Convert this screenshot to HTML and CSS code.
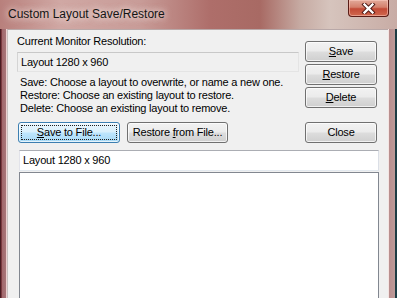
FILE: index.html
```html
<!DOCTYPE html>
<html>
<head>
<meta charset="utf-8">
<link rel="stylesheet" href="styles.css">
</head>
<body>
<div class="window">
  <div class="titlebar">
    <span class="title">Custom Layout Save/Restore</span>
    <div class="close-btn">
      <svg width="17" height="11" viewBox="0 0 17 11">
        <path d="M4.5 1.5 L12.5 9.5 M12.5 1.5 L4.5 9.5" stroke="#4a1410" stroke-width="4.2" stroke-linecap="square" fill="none"/>
        <path d="M4.5 1.5 L12.5 9.5 M12.5 1.5 L4.5 9.5" stroke="#ffffff" stroke-width="2.4" stroke-linecap="square" fill="none"/>
      </svg>
    </div>
  </div>
  <div class="frame-row">
    <div class="frame-left"></div>
    <div class="client">
      <div class="top">
        <div class="info">
          <div class="label">Current Monitor Resolution:</div>
          <div class="res">Layout 1280 x 960</div>
          <div class="help">
            <div>Save: Choose a layout to overwrite, or name a new one.</div>
            <div>Restore: Choose an existing layout to restore.</div>
            <div>Delete: Choose an existing layout to remove.</div>
          </div>
        </div>
        <div class="actions">
          <div class="btn"><span><u>S</u>ave</span></div>
          <div class="btn"><span><u>R</u>estore</span></div>
          <div class="btn"><span><u>D</u>elete</span></div>
        </div>
      </div>
      <div class="filerow">
        <div class="btn btn-wide btn-focus"><span class="focus-ring"><span><u>S</u>ave to File...</span></span></div>
        <div class="btn btn-wide2"><span>Restore <u>f</u>rom File...</span></div>
        <div class="btn btn-close"><span>Close</span></div>
      </div>
      <div class="combo">
        <div class="combo-edit">Layout 1280 x 960</div>
        <div class="combo-list"></div>
      </div>
    </div>
    <div class="frame-right"></div>
  </div>
</div>
</body>
</html>
```
FILE: styles.css
```css
html, body {
  margin: 0;
  padding: 0;
}
body {
  width: 397px;
  height: 298px;
  overflow: hidden;
  background: #1c3c44;
  font-family: "Liberation Sans", Arial, sans-serif;
}
.window {
  width: 397px;
  height: 298px;
  display: flex;
  flex-direction: column;
}
.titlebar {
  height: 29px;
  flex: none;
  display: flex;
  align-items: flex-start;
  background: linear-gradient(to right, #b8807c 0px, #d0a8a4 60px, #c89c98 140px, #ae6e6a 210px, #a86a64 260px, #c6aaa2 300px, #d6c4bd 330px, #c8aca5 397px);
}
.title {
  margin: 7px 0 0 8px;
  font-size: 12px;
  line-height: 15px;
  color: #141414;
  text-shadow: 0 0 6px rgba(255,240,236,0.9), 0 0 10px rgba(255,240,236,0.7);
  flex: 1;
}
.close-btn {
  width: 41px;
  height: 17px;
  margin-right: 8px;
  box-sizing: border-box;
  border: 1px solid #5a1c16;
  border-top: none;
  border-radius: 0 0 4px 4px;
  background: linear-gradient(to bottom, #e2aa9a 0%, #d4806c 45%, #c24a36 55%, #d0684e 100%);
  box-shadow: inset 0 0 0 1px rgba(255,210,200,0.5);
  display: flex;
  align-items: center;
  justify-content: center;
}
.frame-row {
  flex: 1;
  display: flex;
}
.frame-left {
  width: 7px;
  flex: none;
  background: linear-gradient(to right, #4a1c22 0px, #4a1c22 1px, #7a3a40 1px, #7a3a40 2px, #a2686c 2px, #a8767a 6px, #ecd0d0 6px);
}
.frame-right {
  width: 9px;
  flex: none;
  background: linear-gradient(to right, #f4e4e2 0px, #f4e4e2 1px, #b88e8e 1px, #bc9a98 7px, #1c3c44 7px);
}
.client {
  flex: 1;
  background: #f0f0f0;
  border-top: 1px solid #b8a8a8;
  border-left: 1px solid #c8c0c0;
  display: flex;
  flex-direction: column;
  font-size: 11px;
  line-height: 13px;
  letter-spacing: -0.2px;
  color: #000;
}
.top {
  display: flex;
  align-items: flex-start;
}
.info {
  width: 282px;
  margin-left: 9px;
  padding-top: 5px;
}
.res {
  margin-top: 4px;
  height: 13px;
  padding: 3px 3px 2px 3px;
  border: 1px solid #d4d4d4;
  border-color: #c8c8c8 #e4e4e4 #e4e4e4 #d4d4d4;
}
.help {
  margin-top: 4px;
  padding-left: 3px;
}
.actions {
  margin-left: 6px;
  margin-top: 11px;
  display: flex;
  flex-direction: column;
  gap: 2px;
}
.btn {
  box-sizing: border-box;
  width: 72px;
  height: 21px;
  border: 1px solid #707070;
  border-radius: 3px;
  background: linear-gradient(to bottom, #f2f2f2 0%, #ebebeb 48%, #dddddd 52%, #cfcfcf 100%);
  box-shadow: inset 0 0 0 1px rgba(255,255,255,0.7);
  display: flex;
  align-items: center;
  justify-content: center;
  font-size: 11px;
  line-height: 13px;
  white-space: pre;
}
.btn u {
  text-decoration-thickness: 1px;
  text-underline-offset: 1px;
}
.filerow {
  display: flex;
  margin-top: 7px;
  padding-left: 10px;
  gap: 7px;
}
.btn-wide {
  width: 102px;
}
.btn-wide2 {
  width: 101px;
}
.btn-focus {
  border-color: #3c7fb1;
  background: linear-gradient(to bottom, #eaf6fd 0%, #d9f0fc 48%, #bee6fd 52%, #a7d9f5 100%);
  padding: 2px;
}
.focus-ring {
  flex: 1;
  align-self: stretch;
  display: flex;
  align-items: center;
  justify-content: center;
  outline: 1px dotted #202020;
  outline-offset: -1px;
}
.btn-close {
  margin-left: 70px;
}
.combo {
  margin-top: 7px;
  margin-left: 11px;
  width: 360px;
  flex: 1;
  display: flex;
  flex-direction: column;
}
.combo-edit {
  height: 21px;
  box-sizing: border-box;
  padding: 3px 3px 0 3px;
  background: #fff;
  border: 1px solid #abadb3;
  border-color: #abadb3 #dbdfe6 #e3e9ef #e2e3ea;
}
.combo-list {
  flex: 1;
  margin-top: 1px;
  background: #fff;
  border: 1px solid #828790;
  border-bottom: none;
}
```
